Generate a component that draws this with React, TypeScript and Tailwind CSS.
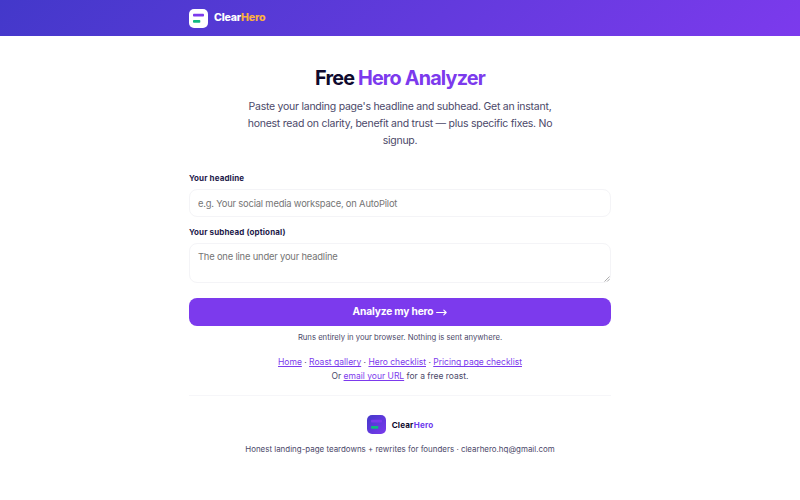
import React, { useState } from 'react';

const links = ['Home', 'Roast gallery', 'Hero checklist', 'Pricing page checklist'];

const Dot: React.FC = () => <span> · </span>;

const App: React.FC = () => {
  const [headline, setHeadline] = useState('');
  const [subhead, setSubhead] = useState('');

  return (
    <div className="min-h-[500px] bg-white font-['Inter',sans-serif] text-[#1e1b4b]">
      {/* Header */}
      <header className="h-9 bg-linear-135 from-[#4338ca] to-[#7c3aed]">
        <div className="mx-auto flex h-full w-[422px] items-center gap-[6px]">
          <svg width="19" height="19" viewBox="0 0 19 19">
            <rect width="19" height="19" rx="5" fill="#fff" />
            <rect x="4" y="4.8" width="11" height="2.8" rx="0.8" fill="#7c3aed" />
            <rect x="4" y="11" width="7.3" height="2.8" rx="0.8" fill="#10b981" />
          </svg>
          <span className="text-[10.6px] font-extrabold tracking-[-0.22px] text-white">
            Clear<span className="text-[#fbb040]">Hero</span>
          </span>
        </div>
      </header>

      <main className="mx-auto w-[422px] pt-[29px]">
        {/* Intro */}
        <h1 className="text-center text-[19.8px] leading-[26px] font-bold tracking-[-0.83px] text-[#0f0a2e]">
          Free <span className="text-[#7c3aed]">Hero Analyzer</span>
        </h1>
        <p className="mx-auto mt-[7px] w-[320px] text-center text-[10.5px] leading-[17.2px] tracking-[-0.25px] whitespace-nowrap text-[#4b4869]">
          Paste your landing page's headline and subhead. Get an instant,<br />
          honest read on clarity, benefit and trust — plus specific fixes. No<br />
          signup.
        </p>

        {/* Form */}
        <form className="mt-[22.4px]" onSubmit={e => e.preventDefault()}>
          <label htmlFor="headline" className="block text-[8px] leading-[13px] font-bold tracking-[0.12px]">Your headline</label>
          <input
            id="headline"
            value={headline}
            onChange={e => setHeadline(e.target.value)}
            placeholder="e.g. Your social media workspace, on AutoPilot"
            className="mt-1 block h-7 w-full rounded-lg border border-[#f4f4f7] px-2 text-[9.4px] tracking-[-0.19px] outline-none placeholder:text-[#757575]"
          />
          <label htmlFor="subhead" className="mt-[9px] block text-[8px] leading-[13px] font-bold tracking-[0.12px]">Your subhead (optional)</label>
          <textarea
            id="subhead"
            value={subhead}
            onChange={e => setSubhead(e.target.value)}
            placeholder="The one line under your headline"
            className="mt-1 block h-10 w-full resize-none rounded-lg border border-[#f4f4f7] px-2 py-[7px] text-[9.4px] leading-3 tracking-[-0.19px] outline-none placeholder:text-[#757575]"
          />
          <svg className="relative -mt-[7px] mr-[1px] ml-auto block" width="6" height="6" viewBox="0 0 6 6" stroke="#777" strokeWidth="0.6">
            <path d="M0.5 5.5 5.5 0.5M3.2 5.5 5.5 3.2" />
          </svg>
          <button type="submit" className="mt-4 flex h-7 w-full items-center justify-center gap-[3px] rounded-lg bg-[#7c3aed] text-[10.2px] font-bold tracking-[-0.16px] text-white">
            Analyze my hero
            <svg width="11" height="7" viewBox="0 0 11 7" fill="none" stroke="currentColor" strokeWidth="1.1" strokeLinecap="round" strokeLinejoin="round">
              <path d="M0.6 3.5H10.2M7.8 1.2 10.2 3.5 7.8 5.8" />
            </svg>
          </button>
        </form>
        <p className="mt-[6.4px] text-center text-[7.7px] leading-3 text-[#4b4869]">
          Runs entirely in your browser. Nothing is sent anywhere.
        </p>

        <div className="mt-[11px] text-center text-[8.5px] leading-[14px] text-[#4b4869]">
          {links.map((l, i) => (
            <React.Fragment key={l}>
              {i > 0 && <Dot />}
              <a href="#" className="text-[#7c3aed] underline">{l}</a>
            </React.Fragment>
          ))}
          <div>
            Or <a href="#" className="text-[#7c3aed] underline">email your URL</a> for a free roast.
          </div>
        </div>

        {/* Footer */}
        <footer className="mt-3 border-t border-[#f6f6f9] pt-[19px] text-center">
          <div className="flex items-center justify-center gap-[6px]">
            <svg width="19" height="19" viewBox="0 0 19 19">
              <defs>
                <linearGradient id="mark" x1="0" y1="0" x2="1" y2="1">
                  <stop stopColor="#4338ca" />
                  <stop offset="1" stopColor="#7c3aed" />
                </linearGradient>
              </defs>
              <rect width="19" height="19" rx="5" fill="url(#mark)" />
              <rect x="4" y="4.8" width="11" height="2.8" rx="0.8" fill="#7c3aed" />
              <rect x="4" y="11" width="7.3" height="2.8" rx="0.8" fill="#10b981" />
            </svg>
            <span className="text-[8.1px] font-bold tracking-[0.16px] text-[#0f0a2e]">
              Clear<span className="text-[#6d3aed]">Hero</span>
            </span>
          </div>
          <p className="mt-[9px] text-[7.95px] leading-3 text-[#4b4869]">
            Honest landing-page teardowns + rewrites for founders · clearhero.hq@gmail.com
          </p>
        </footer>
      </main>
    </div>
  );
};

export default App;
